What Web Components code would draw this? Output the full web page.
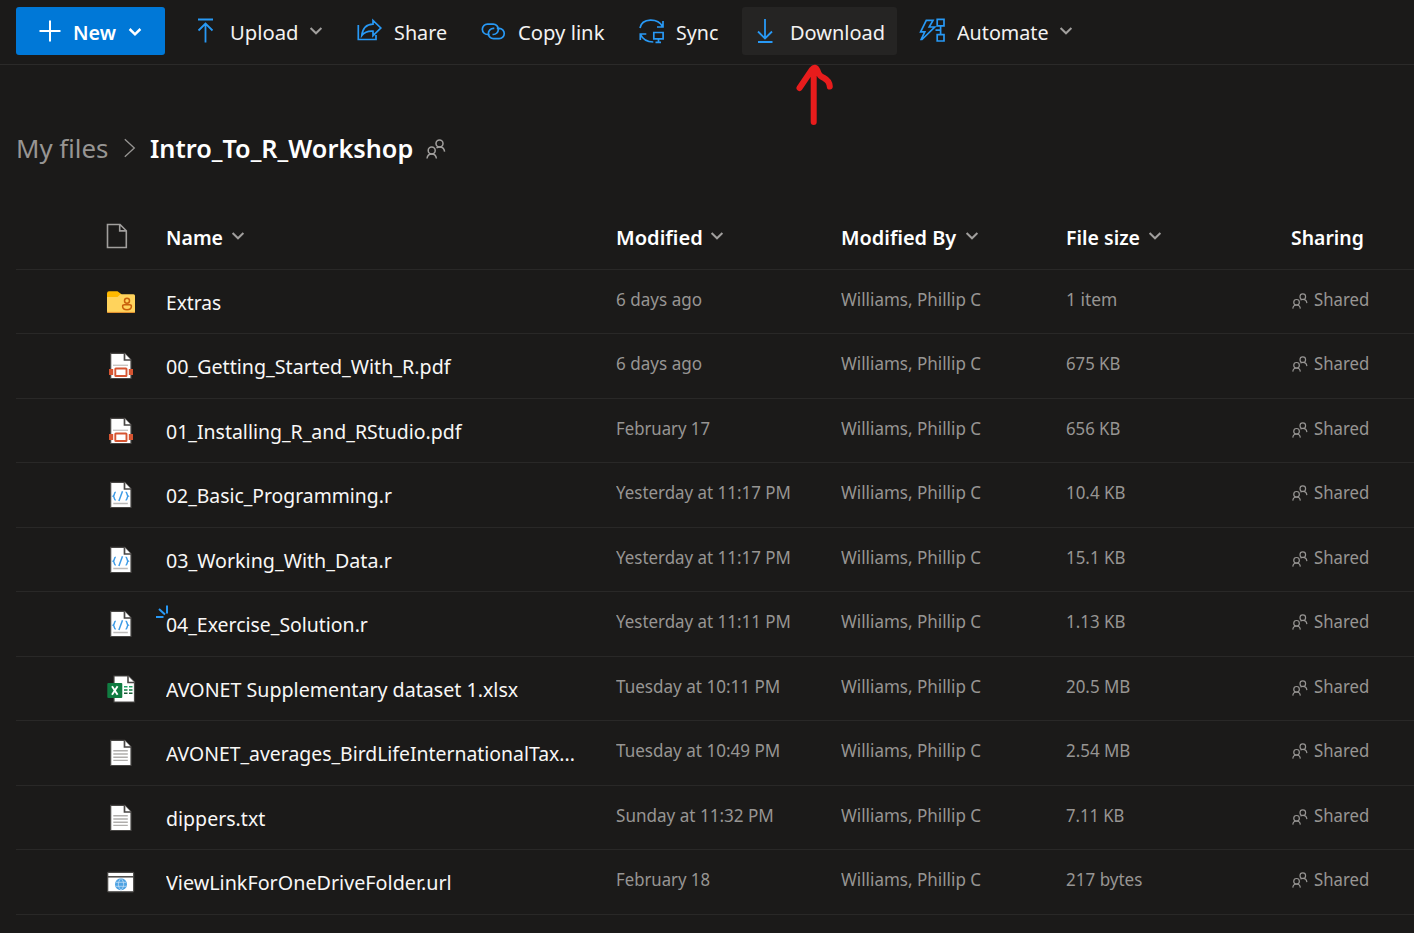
<!DOCTYPE html>
<html lang="en">
<head>
<meta charset="utf-8">
<title>Intro_To_R_Workshop - OneDrive</title>
<style>
  html, body { margin: 0; height: 100%; overflow: hidden; background: #1b1a19; }
  body { font-family: "Noto Sans", "Open Sans", sans-serif; color: #f3f2f1; }
</style>
</head>
<body>
<od-app></od-app>
<script>
const ICONS = {
  plus: [24, 24, '<path d="M12 1.5v21M1.5 12h21" stroke="#fff" stroke-width="2"/>'],
  chevron: [14, 10, '<path d="M1.6 2l5.4 5.3L12.4 2" stroke="currentColor" stroke-width="var(--chev,2)"/>'],
  upload: [24, 26, '<path d="M5 1.500h15M12.5 6v18.500M5.500 12.500l7-7 7 7" stroke="#2899f5" stroke-width="1.800"/>'],
  download: [24, 26, '<path d="M5 24h14.500M12 1v19.500M5 13.500l7 7 7-7" stroke="#2899f5" stroke-width="1.800"/>'],
  share: [26, 26, '<path d="M2.300 7v14.500H20V17M5.800 17.500c.8-7.500 4.500-11.200 11.200-11.400V2.500l7.800 7.500L17 17.700v-4.500c-5.200-.3-8.700 1-11.200 4.300z" stroke="#2899f5" stroke-width="1.700"/>'],
  link: [26, 26, '<path d="M9.700 16.500H7.500a5.100 5.100 0 0 1 0-10.300h5.700a5.100 5.100 0 0 1 0 10.300h-.7M16.800 10.300h2.300a5.100 5.100 0 0 1 0 10.300h-5.600a5.100 5.100 0 0 1 0-10.300h.8" stroke="#2899f5" stroke-width="1.700"/>'],
  sync: [26, 26, '<path d="M2 10C4-.5 20 0 24.500 8.500M25 3v6h-6M2.300 22v-6h6M2.300 16c2 4.500 6 8 13 8M15.800 14.500h9.300v6.300h-9.300zM20.500 20.800v3.500M17.500 24.300h5.500" stroke="#2899f5" stroke-width="1.700"/>'],
  automate: [26, 26, '<path d="M7.300 2.300h6.700L10.200 9h5.500L3 21.500h-.8l3.600-7.700H1.600zM18.200 1.300h6.800v6.500h-6.800zM18.200 16.600h6.800v6.400h-6.800zM21.600 7.800v8.800M16.500 12.200h5" stroke="#2899f5" stroke-width="1.700"/>'],
  crumb: [14, 22, '<path d="M1.800 2.300l9.500 8.700-9.500 8.700" stroke="#979593" stroke-width="1.300"/>'],
  people: [20, 20, '<g stroke="currentColor" stroke-width="1.5"><circle cx="13.500" cy="4.600" r="3.500"/><circle cx="5.700" cy="11.600" r="3.500"/><path d="M1 19.500c.3-2.900 2.200-4.500 4.700-4.500s4.400 1.600 4.700 4.500M10.500 8.900c1-.7 2-.9 3.200-.9 2.600 0 4.500 1.600 4.900 4.600"/></g>'],
  file: [22, 26, '<path d="M1.500 1.500h12.500l6.300 6.300v16.700H1.500zM13.700 1.500v6.400h6.400" stroke="#a19f9d" stroke-width="1.600"/>'],
  folder: [32, 32, '<path d="M2 7.500Q2 5.300 4 5.300h8.500l4 3V12H2z" fill="#ffb900"/><path d="M2 11h10.500l3-2.800H28.500Q30 8.200 30 9.700v16.100Q30 27 28.500 27H3.500Q2 27 2 25.500z" fill="#ffd35c"/><path d="M2.300 26.400h27.400" stroke="#e08a2c"/><circle cx="22" cy="14.800" r="2.500" stroke="#c8600c" stroke-width="1.5"/><path d="M19.500 18.700h5q1.900 0 1.900 1.500c0 2.300-2 3.500-4.400 3.500s-4.400-1.200-4.400-3.500q0-1.500 1.900-1.500z" stroke="#c8600c" stroke-width="1.500"/>'],
  excel: [32, 32, '<path d="M9 3h14.500l6 6v20H9z" fill="#fff" stroke="#484644" stroke-width="1.200"/><path d="M23 3v6.500h6.500" fill="#fff" stroke="#484644" stroke-width="1.600"/><path d="M19 13.800h3.500M24 13.800h3.500" stroke="#21a366" stroke-width="1.600"/><path d="M19 17h3.500M24 17h3.500" stroke="#107c41" stroke-width="1.600"/><path d="M19 20.200h3.500M24 20.200h3.500" stroke="#185c37" stroke-width="1.600"/><rect x="2.300" y="10" width="15" height="15" rx="1" fill="#107c41"/><path d="M7 13.300l5.600 8.400M12.600 13.300L7 21.700" stroke="#fff" stroke-width="1.900"/>'],
  url: [32, 32, '<rect x="2.700" y="6.300" width="26" height="19.500" rx=".8" fill="#fff" stroke="#484644" stroke-width="1.200"/><path d="M2.700 10.800h26" stroke="#484644" stroke-width="1.500"/><circle cx="16" cy="18.300" r="6" fill="#4fa3e3"/><path d="M11 16.300h10M11 20.300h10M16 12.500c-3.500 3-3.500 8.500 0 11.500M16 12.500c3.500 3 3.500 8.500 0 11.500" stroke="#cfe4f6" stroke-width=".7"/>']
};
const page = inner => '<path d="M5.700 3.300h14l6.300 6.400v18.800H5.700z" fill="#fff" stroke="#484644" stroke-width="1.200"/><path d="M19.500 3.300v6.700H26" fill="#fff" stroke="#484644" stroke-width="1.700"/>' + inner;
ICONS.pdf = [32, 32, page('<path d="M8 15.300h15" stroke="#c8c6c4" stroke-width="1.400"/><path d="M4 19h4.200v6H4zM23.800 19H28v6h-4.200z" fill="#d65532"/><rect x="10.300" y="18.500" width="11.200" height="7.500" rx=".6" fill="#fff" stroke="#d65532" stroke-width="1.900"/>')];
ICONS.code = [32, 32, page('<path d="M10.800 13.300c-2 0-.9 2.900-2.600 3.900 1.700 1 .6 3.900 2.600 3.900M20.600 13.300c2 0 .9 2.900 2.600 3.900-1.700 1-.6 3.900-2.600 3.900M17.500 12.300l-3.600 9.700" stroke="#3d9be6" stroke-width="1.500"/><path d="M8.300 24.500h14.500" stroke="#bdbbb9" stroke-width="1.500"/>')];
ICONS.text = [32, 32, page('<path d="M8.300 13.800h14.500M8.300 17h14.500M8.300 20.200h14.500M8.300 23.400h14.500" stroke="#b0aeac" stroke-width="1.400"/>')];

class OdIcon extends HTMLElement {
  connectedCallback() {
    if (this.shadowRoot) return;
    const [w, h, body] = ICONS[this.getAttribute('name')];
    const size = +this.getAttribute('size') || w;
    this.attachShadow({mode: 'open'}).innerHTML =
      `<style>:host{display:block;flex:none;width:${size}px;height:${h * size / w}px}svg{display:block;overflow:visible}</style>
       <svg width="${size}" height="${h * size / w}" viewBox="0 0 ${w} ${h}" fill="none">${body}</svg>`;
  }
}

/* A label that is condensed to occupy exactly the width given in "w". */
class OdText extends HTMLElement {
  connectedCallback() {
    if (this.shadowRoot) return;
    const w = +this.getAttribute('w');
    const cs = getComputedStyle(this);
    const ctx = OdText.ctx || (OdText.ctx = document.createElement('canvas').getContext('2d'));
    ctx.font = `${cs.fontWeight} ${cs.fontSize} ${cs.fontFamily}`;
    const m = ctx.measureText(this.textContent);
    const left = -m.actualBoundingBoxLeft;
    const s = w / (m.actualBoundingBoxRight - left);
    this.attachShadow({mode: 'open'}).innerHTML =
      `<style>:host{display:block;flex:none;width:${w}px;white-space:nowrap}
       span{display:inline-block;transform-origin:0 50%;transform:translateX(${(-left * s).toFixed(2)}px) scaleX(${s.toFixed(4)})}</style><span><slot></slot></span>`;
  }
}

class OdCommand extends HTMLElement {
  connectedCallback() {
    if (this.shadowRoot) return;
    const chev = this.hasAttribute('menu') ? '<od-icon class="c" name="chevron"></od-icon>' : '';
    this.attachShadow({mode: 'open'}).innerHTML =
      `<style>:host{display:flex;align-items:center;box-sizing:border-box;height:48px;padding-left:11px;border-radius:3px;font-size:20.500px;line-height:28px}
       :host([primary]){background:#0078d7;color:#fff;font-weight:600;padding-left:22px;--chev:2.500}
       :host([active]){background:#252423}
       .i{margin-right:14px} :host([primary]) .i{margin-right:12px}
       :host([icon=share]) .i,:host([icon=link]) .i,:host([icon=sync]) .i{margin-right:12.500px}
       :host([icon=automate]) .i{margin-right:11.500px}
       slot{display:block;padding-top:2px}
       .c{margin-left:11.500px;color:#a19f9d;margin-top:-1px} :host([primary]) .c{color:#fff;margin-left:12px;margin-top:1px}</style>
       <od-icon class="i" name="${this.getAttribute('icon')}"></od-icon><slot></slot>${chev}`;
  }
}

class OdToolbar extends HTMLElement {
  connectedCallback() {
    if (this.shadowRoot) return;
    this.attachShadow({mode: 'open'}).innerHTML =
      `<style>:host{display:grid;box-sizing:border-box;height:65px;padding:7px 0 0 16px;border-bottom:1px solid #2b2a29;
       grid-template-columns:149px 163px 124px 158px 115px 155px 180px;align-items:start}
       ::slotted(:nth-child(n+2)){margin-left:17px;margin-right:-17px}
       ::slotted(:nth-child(7)){margin-left:28px}</style><slot></slot>`;
  }
}

class OdBreadcrumb extends HTMLElement {
  connectedCallback() {
    if (this.shadowRoot) return;
    this.attachShadow({mode: 'open'}).innerHTML =
      `<style>:host{display:flex;align-items:center;height:40px;padding:63px 0 38px 17.500px;font-size:26px;line-height:36px}
       .p{color:#979593}.t{color:#fff;font-weight:600}.s{margin:0 13px 0 15px}.q{margin:2px 0 0 14.500px;color:#a19f9d}</style>
       <od-text class="p" w="90">My files</od-text><od-icon class="s" name="crumb"></od-icon>
       <od-text class="t" w="262">Intro_To_R_Workshop</od-text><od-icon class="q" name="people"></od-icon>`;
  }
}

const GRID = 'display:grid;grid-template-columns:150px 450px 225px 225px 225px 1fr;align-items:center;box-sizing:border-box;border-bottom:1px solid #292827;';

class OdHeader extends HTMLElement {
  connectedCallback() {
    if (this.shadowRoot) return;
    const cols = [['Name', 56, 1], ['Modified', 85, 1], ['Modified By', 115, 1], ['File size', 73, 1], ['Sharing', 72, 0]];
    this.attachShadow({mode: 'open'}).innerHTML =
      `<style>:host{${GRID}height:64px;font-size:20.500px;line-height:28px;font-weight:600;color:#fff}
       .f{margin-left:90px;margin-top:-3px} div{display:flex;align-items:center;padding-left:.5px;margin-top:-2px}
       div:last-child{padding:0;margin-left:-.5px}
       .c{color:#a19f9d;margin-left:8px;margin-top:-1px}</style>
       <od-icon class="f" name="file"></od-icon>` +
      cols.map(([t, w, c]) => `<div><od-text w="${w}">${t}</od-text>${c ? '<od-icon class="c" name="chevron"></od-icon>' : ''}</div>`).join('');
  }
}

class OdRow extends HTMLElement {
  set data(d) { this.d = d; }
  connectedCallback() {
    if (this.shadowRoot) return;
    const [icon, name, nw, mod, mw, size, sw, fresh] = this.d;
    const spark = fresh ? '<svg class="n" width="14" height="14" fill="none" stroke="#2899f5" stroke-width="2"><path d="M11 .5v8M3 4l6 5.500M0 12h7.500"/></svg>' : '';
    this.attachShadow({mode: 'open'}).innerHTML =
      `<style>:host{${GRID}height:64px;font-size:17.500px;line-height:24px;color:#979593}
       :host(:nth-child(even)){height:65px}
       .i{margin-left:89px}
       .name{position:relative;font-size:20.200px;line-height:28px;color:#f8f7f6}
       .m{margin-top:-5px}
       :host(:nth-child(even)) .m{margin-top:-7px}
       .s{display:flex;align-items:center;gap:6px;padding-left:1px}
       .s od-icon{margin-top:3px;color:#979593}
       .n{position:absolute;left:-10px;top:-5px}</style>
       <od-icon class="i" name="${icon}"></od-icon>
       <div class="name">${spark}<od-text w="${nw}"${/^[Ed]/.test(name) ? ' style="margin-left:.5px"' : ''}>${name}</od-text></div>
       <od-text class="m" w="${mw}"${/^F/.test(mod) ? ' style="margin-left:.5px"' : ''}>${mod}</od-text>
       <od-text class="m" w="140">Williams, Phillip C</od-text>
       <od-text class="m" w="${sw}"${/^1/.test(size) ? ' style="margin-left:.5px"' : ''}>${size}</od-text>
       <div class="m s"><od-icon name="people" size="16"></od-icon><od-text w="54.500">Shared</od-text></div>`;
  }
}

const FILES = [
  ['folder', 'Extras', 53.5, '6 days ago', 85.5, '1 item', 49],
  ['pdf', '00_Getting_Started_With_R.pdf', 285.5, '6 days ago', 85.5, '675 KB', 54],
  ['pdf', '01_Installing_R_and_RStudio.pdf', 296.5, 'February 17', 93, '656 KB', 54],
  ['code', '02_Basic_Programming.r', 226.5, 'Yesterday at 11:17 PM', 174, '10.4 KB', 58],
  ['code', '03_Working_With_Data.r', 226.5, 'Yesterday at 11:17 PM', 174, '15.1 KB', 58],
  ['code', '04_Exercise_Solution.r', 202.5, 'Yesterday at 11:11 PM', 174, '1.13 KB', 58, true],
  ['excel', 'AVONET Supplementary dataset 1.xlsx', 352.5, 'Tuesday at 10:11 PM', 163.5, '20.5 MB', 64],
  ['text', 'AVONET_averages_BirdLifeInternationalTax...', 407.5, 'Tuesday at 10:49 PM', 163.5, '2.54 MB', 64],
  ['text', 'dippers.txt', 98, 'Sunday at 11:32 PM', 157, '7.11 KB', 58],
  ['url', 'ViewLinkForOneDriveFolder.url', 284.5, 'February 18', 93, '217 bytes', 76]
];

class OdList extends HTMLElement {
  connectedCallback() {
    if (this.shadowRoot) return;
    const root = this.attachShadow({mode: 'open'});
    root.innerHTML = '<style>:host{display:block;padding-left:16px}</style><od-header></od-header><section></section>';
    const box = root.querySelector('section');
    for (const f of FILES) {
      const row = document.createElement('od-row');
      row.data = f;
      box.append(row);
    }
  }
}

class OdApp extends HTMLElement {
  connectedCallback() {
    this.attachShadow({mode: 'open'}).innerHTML =
      `<style>:host{display:block;position:relative;height:933px;overflow:hidden;background:#1b1a19}
       .arrow{position:absolute;left:790px;top:60px}</style>
       <od-toolbar>
         <od-command primary menu icon="plus"><od-text w="42">New</od-text></od-command>
         <od-command menu icon="upload"><od-text w="66">Upload</od-text></od-command>
         <od-command icon="share"><od-text w="51.5">Share</od-text></od-command>
         <od-command icon="link"><od-text w="85.5">Copy link</od-text></od-command>
         <od-command icon="sync"><od-text w="41.5">Sync</od-text></od-command>
         <od-command active icon="download"><od-text w="92.5">Download</od-text></od-command>
         <od-command menu icon="automate"><od-text w="91">Automate</od-text></od-command>
       </od-toolbar>
       <od-breadcrumb></od-breadcrumb>
       <od-list></od-list>
       <svg class="arrow" width="50" height="70" fill="none" stroke="#e81c1c" stroke-width="6" stroke-linecap="round" stroke-linejoin="round"><path d="M23.700 62V10M9.500 28L22 9.500Q25 5.500 27.500 10.500C29 15.500 31 16.500 34 18Q39.500 21 39.800 26.500"/></svg>`;
  }
}

/* Rows take their data as a property, so they are defined before the list creates them. */
customElements.define('od-row', OdRow);
customElements.define('od-app', OdApp);
customElements.define('od-toolbar', OdToolbar);
customElements.define('od-command', OdCommand);
customElements.define('od-breadcrumb', OdBreadcrumb);
customElements.define('od-list', OdList);
customElements.define('od-header', OdHeader);
customElements.define('od-icon', OdIcon);
customElements.define('od-text', OdText);
</script>
</body>
</html>
